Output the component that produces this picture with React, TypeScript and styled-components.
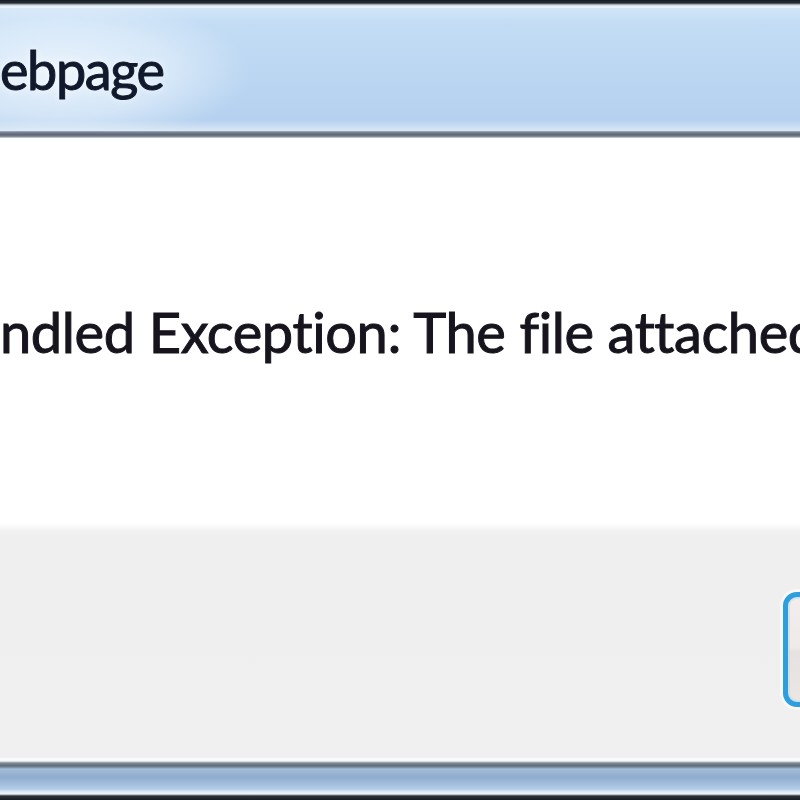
import styled, { createGlobalStyle } from "styled-components";

const GlobalStyle = createGlobalStyle`
  html, body {
    margin: 0;
    padding: 0;
    background: #1b2027;
    overflow: hidden;
  }
  body {
    width: 800px;
    height: 800px;
  }
`;

// the dialog is much wider than the viewport: only a slice of it is shown
const Window = styled.div`
  width: 1191px;
  height: 800px;
  display: flex;
  flex-direction: column;
  font-family: Lato, "Open Sans", sans-serif;
  font-size: 56px;
  font-variant-ligatures: none;
`;

const TopEdge = styled.div`
  height: 8px;
  background: linear-gradient(
    to bottom,
    #181d23 0px,
    #262d35 3px,
    #c9d6e2 5px,
    #f4f8fc 7px,
    #e6f0fa 8px
  );
`;

const TitleBar = styled.div`
  height: 123px;
  padding-top: 33px;
  box-sizing: border-box;
  background:
    radial-gradient(
      ellipse 190px 75px at 60px 52%,
      rgba(242, 248, 254, 0.85) 0%,
      rgba(234, 244, 253, 0.55) 60%,
      rgba(234, 244, 253, 0) 100%
    ),
    linear-gradient(
      to bottom,
      #d3e6f8 0px,
      #c4ddf5 14px,
      #bcd7f2 60px,
      #b5d1ef 112px,
      #c9ddf2 118px,
      #dbe8f5 123px
    );
`;

const Line = styled.div`
  display: flex;
  white-space: pre;
  line-height: 58px;
  letter-spacing: -0.4px;
  -webkit-text-stroke: 1px currentColor;
`;

// the part of a line that lies left of the picture; it overflows to the left, out of view
const Lead = styled.span`
  display: inline-flex;
  justify-content: flex-end;
  width: 0;
  overflow: hidden;
  white-space: pre;
`;

const Title = styled(Line)`
  color: #101a2c;
  font-size: 54px;
  letter-spacing: -1.4px;
  text-shadow: 0 0 8px rgba(255, 255, 255, 0.9);
`;

const ClientEdge = styled.div`
  height: 7px;
  background: linear-gradient(
    to bottom,
    #a3b0be 0px,
    #6a7683 2px,
    #5c6875 4px,
    #8e99a6 6px,
    #e9edf1 7px
  );
`;

const Content = styled.div`
  height: 386px;
  box-sizing: border-box;
  padding-top: 165px;
  background: #ffffff;
`;

const Message = styled(Line)`
  color: #17141e;
`;

const Footer = styled.div`
  height: 233px;
  box-sizing: border-box;
  display: flex;
  justify-content: flex-end;
  align-items: flex-start;
  padding: 68px 48px 0 0;
  background: linear-gradient(
    to bottom,
    #fdfdfd 0px,
    #f3f3f3 6px,
    #efefef 11px,
    #f0f0f0 100%
  );
`;

const Button = styled.button`
  width: 360px;
  height: 115px;
  box-sizing: border-box;
  border: 5px solid #2f9fdc;
  border-radius: 14px;
  font-family: inherit;
  font-size: 56px;
  color: #000;
  background: linear-gradient(
    to bottom,
    #f3eeed 0%,
    #efe9e8 48%,
    #e7e1e0 52%,
    #ebe5e4 100%
  );
  box-shadow:
    0 0 0 3px rgba(251, 247, 245, 0.9),
    inset 0 0 0 2px rgba(180, 225, 248, 0.6);
`;

const BottomEdge = styled.div`
  height: 43px;
  background: linear-gradient(
    to bottom,
    #f0f0f0 0px,
    #fbfcfd 2px,
    #f4f6f8 4px,
    #7c8894 6px,
    #5f6b78 9px,
    #a3bdd9 12px,
    #8fadcf 20px,
    #a5c1e0 28px,
    #b1cdea 32px,
    #e3edf7 35px,
    #eef3f8 37px,
    #2a3038 39px,
    #1a1f25 43px
  );
`;

function App() {
  return (
    <>
      <GlobalStyle />
      <Window>
        <TopEdge />
        <TitleBar>
          <Title>
            <Lead>Message from w</Lead>ebpage
          </Title>
        </TitleBar>
        <ClientEdge />
        <Content>
          <Message>
            <Lead>Unha</Lead>ndled Exception: The file attached to this item could not be opened.
          </Message>
        </Content>
        <Footer>
          <Button>OK</Button>
        </Footer>
        <BottomEdge />
      </Window>
    </>
  );
}

export default App;
